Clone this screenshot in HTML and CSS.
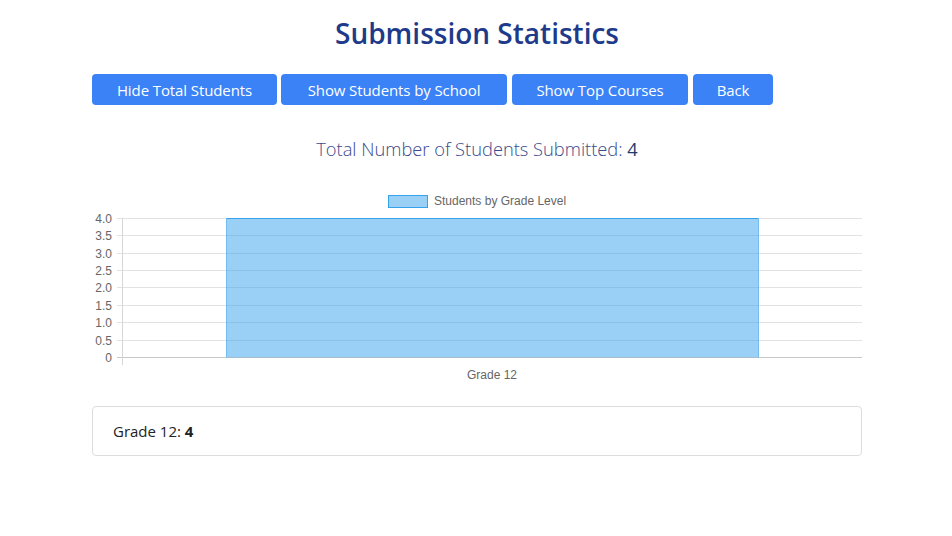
FILE: index.html
```html
<!DOCTYPE html>
<html>
<head>
<meta charset="utf-8">
<link rel="stylesheet" href="styles.css">
</head>
<body>
<div class="container">
  <h1 class="title">Submission Statistics</h1>
  <div class="actions">
    <button class="btn btn-1">Hide Total Students</button>
    <button class="btn btn-2">Show Students by School</button>
    <button class="btn btn-3">Show Top Courses</button>
    <button class="btn btn-4">Back</button>
  </div>
  <p class="total">Total Number of Students Submitted: <span class="num">4</span></p>
  <svg class="chart" width="770" height="200" viewBox="0 0 770 200" xmlns="http://www.w3.org/2000/svg">
    <rect x="296.5" y="10.5" width="39" height="12" fill="rgba(54,162,235,0.5)" stroke="rgb(54,162,235)" stroke-width="1"/>
    <text x="342" y="20" class="lbl">Students by Grade Level</text>
    <g stroke="#e2e2e2" stroke-width="1">
      <line x1="25" y1="33.5" x2="770" y2="33.5"/>
      <line x1="25" y1="50.5" x2="770" y2="50.5"/>
      <line x1="25" y1="68.5" x2="770" y2="68.5"/>
      <line x1="25" y1="85.5" x2="770" y2="85.5"/>
      <line x1="25" y1="102.5" x2="770" y2="102.5"/>
      <line x1="25" y1="120.5" x2="770" y2="120.5"/>
      <line x1="25" y1="137.5" x2="770" y2="137.5"/>
      <line x1="25" y1="155.5" x2="770" y2="155.5"/>
    </g>
    <line x1="25" y1="172.5" x2="770" y2="172.5" stroke="#c8c8c8"/>
    <line x1="30.5" y1="33" x2="30.5" y2="180" stroke="#d6d6d6"/>
    <rect x="134.5" y="33.5" width="532" height="139" fill="rgba(54,162,235,0.5)"/>
    <line x1="134.5" y1="33.5" x2="666.5" y2="33.5" stroke="rgb(54,162,235)"/>
    <line x1="134.5" y1="33.5" x2="134.5" y2="172.5" stroke="rgba(54,162,235,0.6)"/>
    <line x1="666.5" y1="33.5" x2="666.5" y2="172.5" stroke="rgba(54,162,235,0.6)"/>
    <g class="lbl" text-anchor="end">
      <text x="20" y="37.5">4.0</text>
      <text x="20" y="54.5">3.5</text>
      <text x="20" y="72.5">3.0</text>
      <text x="20" y="89.5">2.5</text>
      <text x="20" y="106.5">2.0</text>
      <text x="20" y="124.5">1.5</text>
      <text x="20" y="141.5">1.0</text>
      <text x="20" y="159.5">0.5</text>
      <text x="20" y="176.5">0</text>
    </g>
    <text x="400" y="194" class="lbl" text-anchor="middle">Grade 12</text>
  </svg>
  <div class="card">Grade 12: <strong>4</strong></div>
</div>
</body>
</html>
```
FILE: styles.css
```css
* { box-sizing: border-box; }
body {
  margin: 0;
  background: #fff;
  font-family: "Open Sans", "Noto Sans", sans-serif;
  color: #222;
}
.container {
  width: 770px;
  margin-left: 92px;
}
.title {
  margin: 16px 0 24px;
  font-size: 28px;
  line-height: 34px;
  font-weight: 600;
  text-align: center;
  color: #1e3a8a;
}
.actions {
  display: flex;
  gap: 4px;
  height: 31px;
}
.btn {
  height: 31px;
  padding: 0;
  border: none;
  border-radius: 4px;
  background: #3b82f6;
  color: #fff;
  font-family: "Open Sans", "Noto Sans", sans-serif;
  font-size: 15px;
  letter-spacing: -0.1px;
}
.btn-1 { width: 185px; }
.btn-2 { width: 226px; }
.btn-3 { width: 176px; margin-left: 1px; }
.btn-4 { width: 80px; margin-left: 1px; }
.total {
  margin: 32px 0 24px;
  font-size: 18.3px;
  line-height: 24px;
  font-weight: 300;
  text-align: center;
  color: #3a4a8c;
}
.total .num {
  font-weight: 400;
  color: #1f3a6e;
}
.chart {
  display: block;
}
.lbl {
  font-family: "Liberation Sans", Arial, sans-serif;
  font-size: 12px;
  fill: #666;
}
.card {
  margin-top: 21px;
  border: 1px solid #dcdcdc;
  border-radius: 4px;
  padding: 14px 20px;
  font-size: 15px;
  line-height: 20px;
  color: #222;
}
.card strong { font-weight: 700; }
```
